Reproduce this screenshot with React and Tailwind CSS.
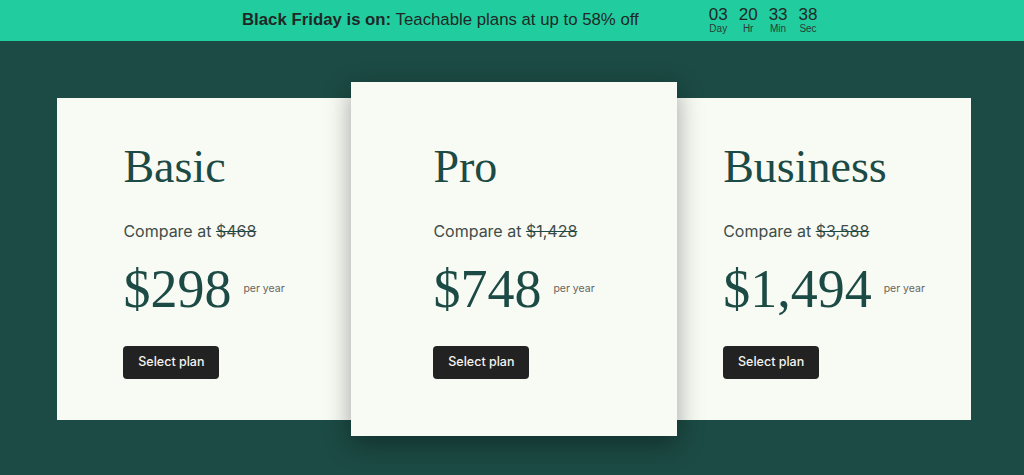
import React from "react";

const serif = { fontFamily: '"Liberation Serif", "Times New Roman", serif' };
const inter = { fontFamily: 'Inter, "Liberation Sans", Arial, sans-serif' };

function Card({ name, compare, price, featured }) {
  return (
    <div
      className={
        "bg-[#f8faf4] flex justify-center " +
        (featured
          ? "w-[326px] h-[354px] pt-[61.5px] relative z-10 shadow-[0_8px_24px_rgba(0,0,0,0.35)]"
          : "w-[294px] h-[322px] pt-[45.5px]")
      }
    >
      <div className="flex flex-col items-start" style={inter}>
        <div className="text-[46px] leading-none text-[#1c4a44]" style={serif}>
          {name}
        </div>
        <div className="mt-[29px] text-[16px] leading-[24px] text-[#3e4d49]">
          Compare at <span className="line-through decoration-[#1c4a44]">{compare}</span>
        </div>
        <div className="mt-[19px] flex items-start">
          <div className="text-[54px] leading-none text-[#1c4a44]" style={serif}>
            {price}
          </div>
          <div className="ml-[12px] mt-[20px] text-[10.5px] leading-[14px] text-[#66665e]">
            per year
          </div>
        </div>
        <button className="mt-[30px] h-[33px] w-[96px] rounded-[4px] bg-[#222222] text-[12.5px] font-medium text-[#f4f4f0]">
          Select plan
        </button>
      </div>
    </div>
  );
}

export default function App() {
  const cd = [
    ["03", "Day"],
    ["20", "Hr"],
    ["33", "Min"],
    ["38", "Sec"],
  ];
  return (
    <div
      className="w-[1024px] h-[475px] bg-[#1c4a44] overflow-hidden"
      style={{ fontFamily: '"Liberation Sans", Arial, sans-serif' }}
    >
      <div className="h-[41px] bg-[#21cd9e] flex items-center pl-[242px] text-[#1f2826]">
        <div className="text-[16.8px] leading-none">
          <span className="font-bold">Black Friday is on:</span> Teachable plans at up to 58% off
        </div>
        <div className="ml-[70px] flex gap-[11px] -mt-[1px]">
          {cd.map(([n, l]) => (
            <div key={l} className="flex flex-col items-center">
              <div className="text-[17px] leading-[18px]">{n}</div>
              <div className="text-[10px] leading-[10px] text-[#2a3a36]">{l}</div>
            </div>
          ))}
        </div>
      </div>
      <div className="pt-[41px] pl-[57px] flex items-center">
        <Card name="Basic" compare="$468" price="$298" />
        <Card name="Pro" compare="$1,428" price="$748" featured />
        <Card name="Business" compare="$3,588" price="$1,494" />
      </div>
    </div>
  );
}
